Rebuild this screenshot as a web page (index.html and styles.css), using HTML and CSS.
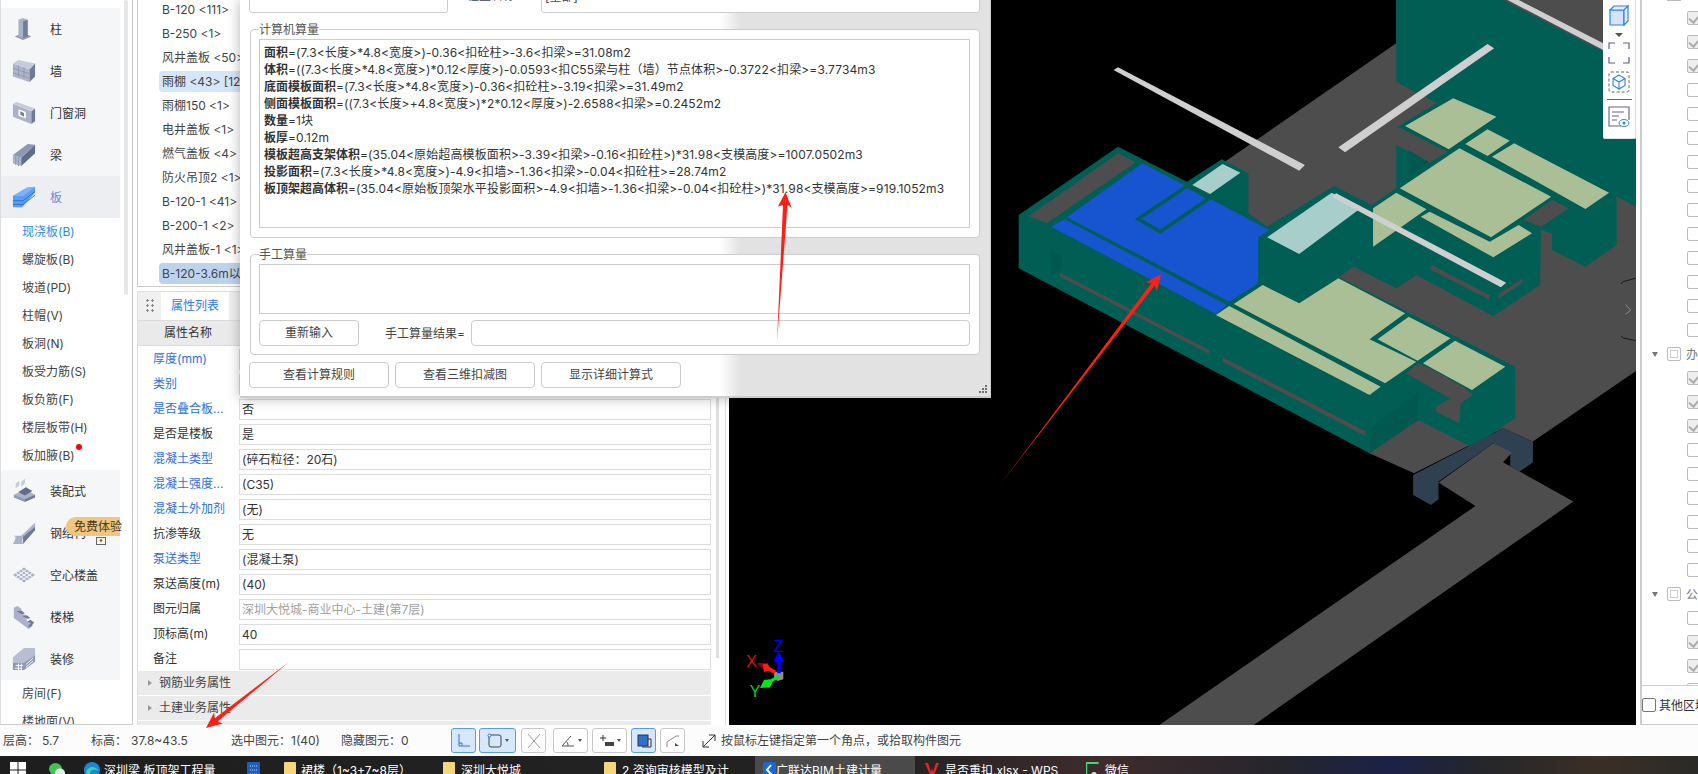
FILE: index.html
```html
<!DOCTYPE html>
<html lang="zh-CN">
<head>
<meta charset="utf-8">
<title>广联达BIM土建计量</title>
<link rel="stylesheet" href="styles.css">
</head>
<body>
<div class="main">
  <aside class="nav">
    <div class="cat"><svg class="ico" viewBox="0 0 26 26"><path d="M3 21l9-4 9 4-9 4z" fill="#8e98b4"/><path d="M7 3l5-2 5 2v18l-5 2-5-2z" fill="#aab2c8"/><path d="M12 5l5-2v18l-5 2z" fill="#727d9c"/></svg><span>柱</span></div>
    <div class="cat"><svg class="ico" viewBox="0 0 26 26"><path d="M1 5l18 6v14L1 19z" fill="#aeb5ca"/><path d="M19 11l6-6v14l-6 6z" fill="#6f7a99"/><path d="M1 5l6-4 18 4-6 6z" fill="#c6cbda"/><path d="M1 10l18 6M1 15l18 6M7 7v5M13 9v6M7 13v6M13 15v6" stroke="#8e98b4" fill="none"/></svg><span>墙</span></div>
    <div class="cat"><svg class="ico" viewBox="0 0 26 26"><path d="M1 3l20 8v14L1 17z" fill="#aab2c8"/><path d="M21 11l4-3v14l-4 3z" fill="#6f7a99"/><path d="M1 3l4-2 20 7-4 3z" fill="#c6cbda"/><path d="M7 9l8 3v7l-8-3z" fill="#fff"/><path d="M9 11l4 2v4l-4-2z" fill="#727d9c"/></svg><span>门窗洞</span></div>
    <div class="cat"><svg class="ico" viewBox="0 0 26 26"><path d="M1 13l9 3v9l-9-3z" fill="#aab2c8"/><path d="M10 16L25 2v9L10 25z" fill="#5f6c8e"/><path d="M1 13L17 1l8 1-15 14z" fill="#8e98b4"/><path d="M4 14v10M7 15v10" stroke="#8e98b4"/></svg><span>梁</span></div>
    <div class="cat cat-on"><svg class="ico" viewBox="0 0 26 26"><path d="M1 12l15-9 9-1v6L11 24H1z" fill="#5b9cf5"/><path d="M1 12h11l13-10-9 1z" fill="#7fb3f8"/><path d="M1 17h11l13-10M1 21h11l13-10" stroke="#2f6fd0" fill="none"/></svg><span>板</span></div>
    <div class="sub sub-on">现浇板(B)</div>
    <div class="sub">螺旋板(B)</div>
    <div class="sub">坡道(PD)</div>
    <div class="sub">柱帽(V)</div>
    <div class="sub">板洞(N)</div>
    <div class="sub">板受力筋(S)</div>
    <div class="sub">板负筋(F)</div>
    <div class="sub">楼层板带(H)</div>
    <div class="sub">板加腋(B)<i class="dot"></i></div>
    <div class="cat"><svg class="ico" viewBox="0 0 26 26"><path d="M2 17l12-6 11 6-11 7z" fill="#aab2c8"/><path d="M2 17v3l12 5v-3z" fill="#8e98b4"/><path d="M14 22l11-5v3l-11 5z" fill="#6f7a99"/><path d="M7 14l8-5 7 4-8 5z" fill="#5f6c8e"/><path d="M4 5l4-3v5l-4 3zM10 3l4-3v5l-4 3z" fill="#c6cbda"/></svg><span>装配式</span></div>
    <div class="cat"><svg class="ico" viewBox="0 0 26 26"><path d="M1 16h9l15-14v4L12 17l-1 5 1 3H1l2-4 1-4z" fill="#aab2c8"/><path d="M12 17L25 6v4L12 25z" fill="#6f7a99"/></svg><span>钢结构</span><b class="trial">免费体验</b><svg class="lock" viewBox="0 0 10 10"><rect x=".5" y="2.5" width="9" height="7" fill="#fff3dc" stroke="#666"/><circle cx="5" cy="5.5" r="1.2" fill="#555"/></svg></div>
    <div class="cat"><svg class="ico" viewBox="0 0 26 26"><path d="M1 13L13 5l12 8-12 8z" fill="#aab2c8"/><path d="M7 9l12 8M10 7l12 8M4 11l12 8M16 7L4 15M19 9L7 17M22 11l-12 8" stroke="#fff"/></svg><span>空心楼盖</span></div>
    <div class="cat"><svg class="ico" viewBox="0 0 26 26"><path d="M2 3l4-2 4 3v5l6 3v5l6 3v3l-4 3L2 14z" fill="#aab2c8"/><path d="M5 7l6 3 3-1-4-3zM11 12l6 3 3-1-4-3zM17 18l5 3 2-2-4-3z" fill="#6f7a99"/><path d="M18 25l4-3v-3l-4 3z" fill="#6f7a99"/></svg><span>楼梯</span></div>
    <div class="cat"><svg class="ico" viewBox="0 0 26 26"><path d="M1 11L13 1h12v14L13 17H1z" fill="#b8bed1"/><path d="M1 17h12L25 9v7L13 25H1z" fill="#8e98b4"/><path d="M4 20h8M3 23h8M7 18v7M10 18v7M15 19l8-7M15 22l8-7" stroke="#fff"/></svg><span>装修</span></div>
    <div class="sub">房间(F)</div>
    <div class="sub">楼地面(V)</div>
    <i class="nav-thumb"></i>
  </aside>

  <section class="center">
    <div class="list">
      <div class="li">B-120 &lt;111&gt;</div>
      <div class="li">B-250 &lt;1&gt;</div>
      <div class="li">风井盖板 &lt;50&gt;</div>
      <div class="li li-a">雨棚 &lt;43&gt; [12</div>
      <div class="li">雨棚150 &lt;1&gt;</div>
      <div class="li">电井盖板 &lt;1&gt;</div>
      <div class="li">燃气盖板 &lt;4&gt;</div>
      <div class="li">防火吊顶2 &lt;1&gt;</div>
      <div class="li">B-120-1 &lt;41&gt;</div>
      <div class="li">B-200-1 &lt;2&gt;</div>
      <div class="li">风井盖板-1 &lt;1&gt;</div>
      <div class="li li-b">B-120-3.6m以</div>
    </div>
    <div class="props">
      <div class="tabs"><i class="grip"></i><span class="tab">属性列表</span></div>
      <div class="thead"><span>属性名称</span></div>
      <div class="pbody">
        <div class="rows">
          <div class="row"><span class="k blue">厚度(mm)</span><span class="v"></span></div>
          <div class="row"><span class="k blue">类别</span><span class="v"></span></div>
          <div class="row"><span class="k blue">是否叠合板...</span><span class="v">否</span></div>
          <div class="row"><span class="k">是否是楼板</span><span class="v">是</span></div>
          <div class="row"><span class="k blue">混凝土类型</span><span class="v">(碎石粒径：20石)</span></div>
          <div class="row"><span class="k blue">混凝土强度...</span><span class="v">(C35)</span></div>
          <div class="row"><span class="k blue">混凝土外加剂</span><span class="v">(无)</span></div>
          <div class="row"><span class="k">抗渗等级</span><span class="v">无</span></div>
          <div class="row"><span class="k blue">泵送类型</span><span class="v">(混凝土泵)</span></div>
          <div class="row"><span class="k">泵送高度(m)</span><span class="v">(40)</span></div>
          <div class="row"><span class="k">图元归属</span><span class="v v-dim">深圳大悦城-商业中心-土建(第7层)</span></div>
          <div class="row"><span class="k">顶标高(m)</span><span class="v">40</span></div>
          <div class="row"><span class="k">备注</span><span class="v"></span></div>
          <div class="grp"><i class="tri"></i>钢筋业务属性</div>
          <div class="grp"><i class="tri"></i>土建业务属性</div>
          <div class="grp"></div>
        </div>
        <i class="pthumb"></i>
      </div>
    </div>
  </section>

  <div class="view">
    <svg class="scene" viewBox="0 0 907 725" width="907" height="725">
      <g transform="translate(271 0) scale(.4452 .3333)">
        <polygon fill="#4d4d4d" points="890,130 500,490 500,700 830,1360 930,1420 1130,1285 1197,1325 1429,1113 1429,0 890,0"/>
        <polygon fill="#015e54" points="890,0 1130,0 1429,205 1429,620 890,245"/>
        <polygon fill="#015e54" points="42,645 265,440 420,545 498,478 558,520 558,640 600,680 750,558 835,615 890,565 890,435 965,488 1005,455 893,380 1018,280 1135,350 1135,395 1385,580 1385,735 1315,800 1240,750 1240,700 1215,690 1213,855 1108,948 935,825 890,865 795,800 760,830 1157,1100 1157,1255 1060,1342 940,1260 830,1360 42,805"/>
        <polygon fill="#01584e" points="830,1285 830,1360 938,1260 938,1180"/>
        <polygon fill="#01584e" points="918,450 965,488 918,525"/>
        <polygon fill="#01584e" points="115,750 140,770 140,810 115,825"/>
        <polygon fill="#4d4d4d" points="65,648 265,460 305,487 105,670"/>
        <polygon fill="#1754cf" points="150,652 320,490 605,690 580,712 580,850 515,905"/>
        <polygon fill="#1754cf" points="115,680 145,658 510,915 485,942"/>
        <polygon fill="none" stroke="#015e54" stroke-width="3.5" vector-effect="non-scaling-stroke" points="310,657 420,558 470,595 360,695"/>
        <polygon fill="#a7cecb" points="432,555 500,492 540,518 472,582"/>
        <polygon fill="#a7cecb" points="600,712 745,578 810,625 672,762"/>
        <g fill="#abbf97">
          <polygon points="910,378 1018,295 1115,350 1008,448"/>
          <polygon points="1045,432 1095,388 1145,422 1095,468"/>
          <polygon points="1105,470 1155,430 1368,578 1315,627"/>
          <polygon points="898,565 1032,445 1238,590 1103,712"/>
          <polygon points="838,625 890,578 958,628 838,740"/>
          <polygon points="945,650 965,635 1100,725 1165,675 1195,700 1108,772"/>
          <polygon points="525,912 590,855 672,910 760,835 910,940 830,1018 935,1085 865,1150"/>
          <polygon points="485,945 515,918 855,1160 830,1185"/>
          <polygon points="848,1018 918,950 1012,1015 938,1082"/>
          <polygon points="950,1090 1022,1022 1135,1100 1060,1170"/>
        </g>
        <g fill="#4d4d4d">
          <polygon points="912,1120 940,1090 975,1110 1040,1160 1062,1185 1035,1210 1032,1270 980,1235 980,1220 1010,1195"/>
          <polygon points="1175,660 1240,600 1278,625 1215,680"/>
          <polygon points="135,818 470,1050 470,1062 135,830"/>
          <polygon points="500,1072 820,1293 820,1308 500,1085"/>
          <polygon points="970,795 1100,885 1100,900 965,808"/>
          <polygon points="1120,882 1175,835 1172,850 1120,897"/>
        </g>
        <polygon fill="#2f4050" points="928,1425 1130,1285 1197,1325 1197,1388 1167,1415 1146,1398 1146,1365 1108,1330 985,1445 985,1498 968,1515 928,1485"/>
        <polygon fill="#4d4d4d" points="985,1448 1108,1330 1150,1358 1130,1387 1288,1505 570,2175 358,2175 1068,1518"/>
        <g fill="#cfcfcf">
          <polygon points="255,210 265,202 685,495 672,512"/>
          <polygon points="760,442 1095,132 1110,145 775,457"/>
          <polygon points="745,590 755,580 1137,848 1125,862"/>
          <polygon points="1140,0 1165,0 1355,130 1355,150"/>
        </g>
        <polyline fill="none" stroke="#8a8a8a" stroke-width="1" vector-effect="non-scaling-stroke" points="1405,915 1417,930 1405,943"/>
        <polyline fill="none" stroke="#1a1a1a" stroke-width="1" vector-effect="non-scaling-stroke" points="1395,852 1400,845 1427,835"/>
        <polyline fill="none" stroke="#1a1a1a" stroke-width="1" vector-effect="non-scaling-stroke" points="1395,1008 1400,1014 1428,1022"/>
      </g>
      <g transform="translate(-9 420) scale(.3333)">
        <polygon fill="#8f8f8f" points="162,755 190,755 190,778 172,783 162,772"/>
        <polygon fill="#8b0000" points="110,730 135,728 132,750"/>
        <polygon fill="#ff1a1a" points="128,733 142,730 148,740 168,752 164,762 145,752 132,757"/>
        <polygon fill="#0000ff" points="176,695 192,722 182,730 182,760 172,760 172,730 161,722"/>
        <polygon fill="#00e81a" points="175,765 180,772 158,785 150,802 120,804 132,780 152,778"/>
        <text class="ax" x="176" y="696" fill="#0000ff">Z</text>
        <text class="ax" x="95" y="740" fill="#e01010">X</text>
        <text class="ax" x="105" y="832" fill="#00d020">Y</text>
      </g>
    </svg>
    <div class="vtools">
      <svg viewBox="0 0 22 22" width="22" height="22"><path d="M2 6h14v15H2z" fill="#d3e4fb" stroke="#2f80ed" stroke-width="1.2"/><path d="M2 6l4-4h14l-4 4zM16 6l4-4v15l-4 4z" fill="#e8f1fd" stroke="#2f80ed" stroke-width="1.2"/></svg>
      <i class="vcaret"></i>
      <svg viewBox="0 0 22 22" width="22" height="22"><path d="M1 7V1h6M15 1h6v6M21 15v6h-6M7 21H1v-6" fill="none" stroke="#5b6478" stroke-width="1.2"/></svg>
      <svg class="vgap" viewBox="0 0 22 22" width="22" height="22"><rect x="1" y="1" width="20" height="20" rx="2" fill="none" stroke="#5b6478" stroke-dasharray="3 2"/><path d="M11 4l6 3.5v7L11 18l-6-3.5v-7zM5 7.5l6 3.500 6-3.500M11 11v7" fill="none" stroke="#2f80ed" stroke-width="1.100"/></svg>
      <i class="vline"></i>
      <svg viewBox="0 0 22 22" width="22" height="22"><path d="M13 20H1V1h20v13" fill="none" stroke="#5b6478" stroke-width="1.100"/><path d="M4 6h12M4 10h7M4 14h5" stroke="#5b6478"/><ellipse cx="16" cy="17" rx="5" ry="3.500" fill="#fff" stroke="#2f80ed"/><circle cx="16" cy="17" r="1.500" fill="#2f80ed"/></svg>
    </div>
  </div>

  <aside class="right">
    <div class="rinner">
      <div class="tree">
        <div class="stub"></div>
        <div class="t"><i class="cb on"></i></div><div class="t"><i class="cb on"></i></div><div class="t"><i class="cb on"></i></div>
        <div class="t"><i class="cb"></i></div><div class="t"><i class="cb"></i></div><div class="t"><i class="cb"></i></div><div class="t"><i class="cb"></i></div><div class="t"><i class="cb"></i></div><div class="t"><i class="cb"></i></div><div class="t"><i class="cb"></i></div><div class="t"><i class="cb"></i></div><div class="t"><i class="cb"></i></div><div class="t"><i class="cb"></i></div><div class="t"><i class="cb"></i></div>
        <div class="tg"><i class="tdown"></i><i class="cb cb-g"></i><span>办</span></div>
        <div class="t"><i class="cb on"></i></div><div class="t"><i class="cb on"></i></div><div class="t"><i class="cb on"></i></div>
        <div class="t"><i class="cb"></i></div><div class="t"><i class="cb"></i></div><div class="t"><i class="cb"></i></div><div class="t"><i class="cb"></i></div><div class="t"><i class="cb"></i></div><div class="t"><i class="cb"></i></div>
        <div class="tg"><i class="tdown"></i><i class="cb cb-g"></i><span>公</span></div>
        <div class="t"><i class="cb"></i></div><div class="t"><i class="cb on"></i></div><div class="t"><i class="cb on"></i></div><div class="t"><i class="cb"></i></div>
      </div>
      <div class="other"><i class="cb cb-o"></i><span>其他区域</span></div>
    </div>
  </aside>
</div>

<footer class="status">
  <span class="st w39">层高：</span><span class="st w49">5.7</span>
  <span class="st w40">标高：</span><span class="st w100">37.8~43.5</span>
  <span class="st w60">选中图元：</span><span class="st w50">1(40)</span>
  <span class="st w60">隐藏图元：</span><span class="st w50">0</span>
  <span class="sb sb-on w25"><svg viewBox="0 0 16 16" width="16" height="16"><path d="M3 1v12h11" fill="none" stroke="#2f6fd0"/><path d="M3 10h3v3" fill="none" stroke="#2f6fd0"/></svg></span>
  <span class="sb sb-on w37 mg3"><svg viewBox="0 0 16 16" width="16" height="16"><rect x="2" y="2" width="12" height="12" rx="2" fill="none" stroke="#444"/><circle cx="2.500" cy="2.500" r="1.500" fill="#fff" stroke="#2f6fd0"/></svg><i class="caret"></i></span>
  <span class="sb w25 mg5"><svg viewBox="0 0 16 16" width="16" height="16"><path d="M2 1l12 14M14 1L2 15" stroke="#999" fill="none"/></svg></span>
  <span class="sb w35 mg7"><svg viewBox="0 0 16 16" width="16" height="16"><path d="M2 13L11 3M2 13h12" stroke="#555" fill="none"/><path d="M8 13a6 6 0 0 0-1-4" stroke="#555" fill="none"/></svg><i class="caret"></i></span>
  <span class="sb w35 mg4"><svg viewBox="0 0 16 16" width="16" height="16"><path d="M1 5h6M4 2v6" stroke="#333" fill="none"/><rect x="6" y="9" width="9" height="4" fill="#444"/></svg><i class="caret"></i></span>
  <span class="sb sb-on w25 mg4"><svg viewBox="0 0 16 16" width="16" height="16"><rect x="2" y="2" width="10" height="11" fill="#2f6fd0" stroke="#333"/><path d="M12 6h3v8H6" fill="none" stroke="#333"/></svg></span>
  <span class="sb w25 mg4"><svg viewBox="0 0 16 16" width="16" height="16"><path d="M2 14V9l9-6h3" fill="none" stroke="#888"/><path d="M10 10l4 3h-4z" fill="#444"/></svg></span>
  <svg class="expand" viewBox="0 0 16 16" width="16" height="16"><path d="M2 14L14 2M8 2h6v6M2 8v6h6" fill="none" stroke="#333"/></svg>
  <span class="st">按鼠标左键指定第一个角点，或拾取构件图元</span>
</footer>

<footer class="taskbar">
  <span class="tb tb1"><svg viewBox="0 0 16 16" width="16" height="16"><path d="M0 0h7.500v7.500H0zM8.500 0H16v7.500H8.500zM0 8.500h7.500V16H0zM8.500 8.500H16V16H8.500z" fill="#fff"/></svg></span>
  <span class="tb tb2"><svg viewBox="0 0 16 16" width="16" height="16"><ellipse cx="6.500" cy="7" rx="6.500" ry="6" fill="#3fc24f"/><ellipse cx="11" cy="11" rx="5" ry="4.500" fill="#e8f5e9"/></svg></span>
  <span class="tb tb3"><svg viewBox="0 0 16 16" width="16" height="16"><circle cx="8" cy="8" r="8" fill="#1b86d8"/><path d="M2 10c2-6 10-7 12-1-3-2-8-2-8 3 0 2 2 3 4 4-4 1-7-2-8-6z" fill="#3fd0a0"/></svg><em>深圳梁 板顶架工程量</em></span>
  <span class="tb tb4"><svg viewBox="0 0 13 16" width="13" height="16"><rect width="13" height="16" rx="1" fill="#1d5fb8"/><path d="M3 4h7M3 8h7M3 12h7" stroke="#bcd6f5" stroke-dasharray="1 1"/></svg></span>
  <span class="tb tb5"><i class="folder"></i><em>裙楼（1~3+7~8层）</em></span>
  <span class="tb tb6"><i class="folder"></i><em>深圳大悦城</em></span>
  <span class="tb tb7"><i class="folder"></i><em>2 咨询审核模型及计</em></span>
  <span class="tb tb8"><svg viewBox="0 0 13 16" width="13" height="16"><rect width="13" height="16" rx="2" fill="#1668dc"/><path d="M8 3L4 8l5 5" fill="none" stroke="#fff" stroke-width="2"/></svg><em>广联达BIM土建计量</em></span>
  <span class="tb tb9"><svg viewBox="0 0 16 14" width="16" height="14"><path d="M1 1h3l3 9 1-4 1 4 3-9h3l-5 12H6z" fill="#e8262a"/></svg><em>是否重扣.xlsx - WPS</em></span>
  <span class="tb tb10"><svg viewBox="0 0 13 16" width="13" height="16"><path d="M.5 16V1h12" fill="none" stroke="#3fd67a" stroke-width="1.500"/><path d="M.5 1h12" stroke="#3fd67a" stroke-width="2"/><circle cx="8" cy="13" r="3" fill="#ddd"/></svg><em>微信</em></span>
</footer>

<div class="dialog">
  <div class="dtop">
    <span class="dinput"></span>
    <span class="dlabel">工程量名称：</span>
    <span class="dselect">[全部]</span>
  </div>
  <div class="fs fs1">
    <span class="legend">计算机算量</span>
    <div class="calc">
      <p><b>面积</b>=(7.3&lt;长度&gt;*4.8&lt;宽度&gt;)-0.36&lt;扣砼柱&gt;-3.6&lt;扣梁&gt;=31.08m2</p>
      <p><b>体积</b>=((7.3&lt;长度&gt;*4.8&lt;宽度&gt;)*0.12&lt;厚度&gt;)-0.0593&lt;扣C55梁与柱（墙）节点体积&gt;-0.3722&lt;扣梁&gt;=3.7734m3</p>
      <p><b>底面模板面积</b>=(7.3&lt;长度&gt;*4.8&lt;宽度&gt;)-0.36&lt;扣砼柱&gt;-3.19&lt;扣梁&gt;=31.49m2</p>
      <p><b>侧面模板面积</b>=((7.3&lt;长度&gt;+4.8&lt;宽度&gt;)*2*0.12&lt;厚度&gt;)-2.6588&lt;扣梁&gt;=0.2452m2</p>
      <p><b>数量</b>=1块</p>
      <p><b>板厚</b>=0.12m</p>
      <p><b>模板超高支架体积</b>=(35.04&lt;原始超高模板面积&gt;-3.39&lt;扣梁&gt;-0.16&lt;扣砼柱&gt;)*31.98&lt;支模高度&gt;=1007.0502m3</p>
      <p><b>投影面积</b>=(7.3&lt;长度&gt;*4.8&lt;宽度&gt;)-4.9&lt;扣墙&gt;-1.36&lt;扣梁&gt;-0.04&lt;扣砼柱&gt;=28.74m2</p>
      <p><b>板顶架超高体积</b>=(35.04&lt;原始板顶架水平投影面积&gt;-4.9&lt;扣墙&gt;-1.36&lt;扣梁&gt;-0.04&lt;扣砼柱&gt;)*31.98&lt;支模高度&gt;=919.1052m3</p>
    </div>
  </div>
  <div class="fs fs2">
    <span class="legend">手工算量</span>
    <div class="manual"></div>
    <div class="mrow">
      <span class="btn b100">重新输入</span>
      <span class="mlabel">手工算量结果=</span>
      <span class="minput"></span>
    </div>
  </div>
  <div class="dbtns">
    <span class="btn b140">查看计算规则</span>
    <span class="btn b140">查看三维扣减图</span>
    <span class="btn b140">显示详细计算式</span>
  </div>
  <svg class="resize" viewBox="0 0 8 8" width="8" height="8"><path d="M6 0h2v2H6zM3 3h2v2H3zM6 3h2v2H6zM0 6h2v2H0zM3 6h2v2H3zM6 6h2v2H6z" fill="#6f6f6f"/></svg>
</div>

<svg class="annot" viewBox="0 0 1698 774" width="1698" height="774">
  <polygon fill="#ff2015" points="1000,485 1154.700,285.500 1156.900,290.900 1161,274 1145.700,282.500 1151.500,283.100"/>
  <polygon fill="#ff2015" points="777,342 787.500,205 791.500,207.400 785.500,192 778,206.600 783,205"/>
  <polygon fill="#ff2015" points="289,662 217.600,721.600 222.900,723.500 206,728 214.100,712.500 214.800,718.200"/>
</svg>
</body>
</html>
```
FILE: styles.css
```css
* { box-sizing: border-box; }
html, body { margin: 0; padding: 0; }
body {
  width: 1698px; height: 774px; overflow: hidden; position: relative; background: #fff;
  font: 12px/17px Inter, "Noto Sans CJK SC", sans-serif; color: #333;
}
i, em { font-style: normal; display: block; }
.main { display: flex; height: 725px; }

/* left nav */
.nav { position: relative; width: 133px; height: 725px; overflow: hidden; padding-top: 8px; border-left: 1px solid #ddd; border-right: 1px solid #ccc; border-bottom: 1px solid #ccc; flex: none; }
.cat { position: relative; width: 119px; height: 42px; display: flex; align-items: center; gap: 14px; padding-left: 11px; background: #f5f6f8; }
.cat-on { background: #edeef2; color: #7389d8; }
.ico { width: 24px; height: 24px; flex: none; }
.sub { position: relative; height: 28px; line-height: 28px; padding-left: 21px; color: #444; white-space: nowrap; }
.sub-on { color: #2a8cf0; }
.dot { position: absolute; left: 75px; top: 2px; width: 6px; height: 6px; border-radius: 50%; background: #f00; }
.trial { position: absolute; left: 65px; top: 5px; width: 54px; height: 19px; line-height: 19px; padding-left: 8px; font-weight: 400; background: #f0c67f; border-radius: 10px 0 0 10px; color: #4a3a20; white-space: nowrap; }
.lock { position: absolute; left: 95px; top: 23px; width: 10px; height: 10px; }
.nav-thumb { position: absolute; left: 123px; top: 0; width: 4px; height: 295px; background: #e6e6e6; border-radius: 2px; }

/* center column */
.center { width: 589px; margin-left: 4px; flex: none; display: flex; flex-direction: column; gap: 4px; }
.list { height: 287px; border: 1px solid #ccc; border-top: 0; display: flex; flex-direction: column; justify-content: flex-end; overflow: hidden; flex: none; }
.li { height: 24px; flex: none; padding: 0 0 0 24px; line-height: 24px; color: #444; white-space: pre; }
.li-a, .li-b { position: relative; z-index: 0; }
.li-a::before, .li-b::before { content: ""; position: absolute; z-index: -1; left: 21px; right: 0; top: 1px; height: 21px; border-radius: 4px 0 0 4px; background: #d6e6f9; }
.li-b::before { background: #bdd3ec; }
.props { flex: 1; border: 1px solid #ddd; border-bottom: 0; overflow: hidden; display: flex; flex-direction: column; min-height: 0; }
.tabs { height: 29px; background: #f0f0f0; display: flex; align-items: stretch; flex: none; border-bottom: 1px solid #ddd; }
.grip { width: 8px; height: 15px; margin: 7px 0 0 8px; background: radial-gradient(circle at 1.500px 1.500px, #888 1.300px, transparent 1.400px) 0 0 / 5px 5px; }
.tab { width: 68px; margin-left: 7px; background: #fff; text-align: center; line-height: 28px; color: #2a7be8; }
.thead { height: 25px; background: #eaeaea; border-bottom: 1px solid #ddd; line-height: 24px; padding-left: 26px; flex: none; }
.pbody { display: flex; flex: 1; min-height: 0; }
.rows { width: 573px; flex: none; }
.row { height: 25px; display: flex; align-items: flex-start; }
.k { width: 101px; padding-left: 15px; line-height: 25px; white-space: nowrap; flex: none; }
.blue { color: #2a6fe8; }
.v { flex: 1; height: 21px; margin-top: 3px; border: 1px solid #ddd; padding-left: 2px; line-height: 19px; }
.v-dim { color: #a0a0a0; }
.grp { height: 24px; margin-bottom: 1px; background: #ebebeb; line-height: 24px; display: flex; align-items: center; color: #444; }
.tri { width: 0; height: 0; margin: 0 7px 0 10px; border-left: 4px solid #999; border-top: 3px solid transparent; border-bottom: 3px solid transparent; }
.pthumb { width: 3px; height: 312px; margin-left: 5px; background: #ddd; }

/* 3D view */
.view { position: relative; width: 907px; height: 725px; margin-left: 3px; background: #000; flex: none; overflow: hidden; }
.scene { display: block; }
.ax { font: 48px "Liberation Sans", sans-serif; text-anchor: middle; }
.vtools { position: absolute; right: 0; top: 0; width: 33px; height: 139px; background: #fff; border-radius: 0 0 2px 2px; border-right: 1px solid #ddd; border-bottom: 1px solid #ddd; display: flex; flex-direction: column; align-items: center; padding-top: 4px; }
.vcaret { width: 0; height: 0; margin: 7px 0 5px; border-top: 4px solid #555; border-left: 4px solid transparent; border-right: 4px solid transparent; }
.vgap { margin-top: 7px; }
.vline { width: 25px; height: 1px; background: #666; margin: 6px 0; }

/* right tree */
.right { width: 62px; padding-left: 4px; flex: none; overflow: hidden; }
.rinner { height: 725px; border-left: 2px solid #ccc; border-bottom: 1px solid #ccc; width: 100px; display: flex; flex-direction: column; }
.tree { height: 685px; overflow: hidden; flex: none; }
.stub { height: 6px; }
.stub::before { content: ""; display: block; width: 14px; height: 1px; margin-left: 25px; background: #bbb; }
.t, .tg { height: 24px; display: flex; align-items: center; color: #777; }
.t { padding-left: 45px; }
.tg { position: relative; padding-left: 25px; }
.tg span { margin-left: 5px; }
.tdown { position: absolute; left: 10px; top: 10px; border-top: 5px solid #777; border-left: 3.500px solid transparent; border-right: 3.500px solid transparent; }
.cb { position: relative; display: block; width: 14px; height: 14px; flex: none; border: 1px solid #bbb; border-radius: 2px; background: #fff; }
.cb.on { background: #eee; }
.cb.on::after { content: ""; position: absolute; left: 3px; top: 0; width: 5px; height: 9px; border-right: 2px solid #aaa; border-bottom: 2px solid #aaa; transform: rotate(40deg); }
.cb-g::after { content: ""; position: absolute; left: 2px; top: 2px; right: 2px; bottom: 2px; border: 1px solid #ccc; }
.other { flex: 1; border-top: 1px solid #ccc; display: flex; align-items: center; white-space: nowrap; color: #333; }
.cb-o { border-color: #777; margin-right: 3px; }

/* status */
.status { height: 31px; background: #fcfcfc; display: flex; align-items: center; padding-left: 3px; color: #444; white-space: nowrap; }
.st { display: block; flex: none; }
.w39 { width: 39px; } .w49 { width: 49px; } .w40 { width: 40px; } .w100 { width: 100px; } .w60 { width: 60px; } .w50 { width: 50px; }
.sb { height: 25px; border: 1px solid #c8c8c8; border-radius: 3px; background: #fff; display: flex; align-items: center; justify-content: center; gap: 2px; flex: none; }
.sb-on { background: #d8e8fc; border-color: #5a9be8; }
.w25 { width: 25px; } .w35 { width: 35px; } .w37 { width: 37px; }
.mg3 { margin-left: 3px; } .mg4 { margin-left: 4px; } .mg5 { margin-left: 5px; } .mg7 { margin-left: 7px; }
.caret { width: 0; height: 0; border-top: 3px solid #555; border-left: 2.500px solid transparent; border-right: 2.500px solid transparent; }
.expand { margin: 0 4px 0 16px; flex: none; }

/* taskbar */
.taskbar { height: 18px; overflow: hidden; display: flex; color: #fff; background: linear-gradient(90deg, #1e1e1e 0, #232323 900px, #3f2b2d 1100px, #25252c 1280px, #1c2248 1390px, #24262a 1480px, #3a2f25 1600px, #2a2a28 1698px); }
.tb { display: flex; align-items: flex-start; padding-top: 7px; height: 18px; white-space: nowrap; flex: none; gap: 3px; }
.tb svg, .tb .folder { flex: none; margin-top: -1px; }
.tb em { line-height: 16px; }
.tb1 { width: 49px; padding-left: 10px; }
.tb2 { width: 35px; }
.tb3 { width: 163px; gap: 4px; }
.tb4 { width: 37px; }
.tb5 { width: 159px; gap: 5px; } .tb6 { width: 161px; gap: 6px; } .tb7 { width: 151px; gap: 6px; }
.tb8 { width: 160px; padding-left: 8px; background: #4a4a4a; gap: 0; }
.tb9 { width: 171px; padding-left: 9px; gap: 5px; }
.tb10 { gap: 6px; }
.folder { width: 12px; height: 16px; background: #f5d67a; border-radius: 1px; }

/* dialog */
.dialog { position: absolute; left: 240px; top: 0; width: 751px; height: 398px; background: linear-gradient(90deg, #fff 0, #fff 480px, #e2e2e2 500px); border-right: 1px solid #ccc; border-bottom: 2px solid #ccc; box-shadow: 0 0 12px rgba(0,0,0,.3); padding-left: 10px; display: flex; flex-direction: column; align-items: flex-start; color: #333; }
.dtop { display: flex; height: 13px; overflow: hidden; align-items: flex-end; margin-left: -1px; flex: none; }
.dinput { width: 199px; height: 20px; background: #fff; border: 1px solid #ccc; border-radius: 3px; }
.dlabel { width: 86px; margin-left: 7px; height: 20px; line-height: 6px; color: #444; }
.dselect { width: 439px; height: 20px; background: #fff; border: 1px solid #ccc; border-radius: 3px; padding-left: 3px; line-height: 6px; color: #444; }
.fs { position: relative; width: 730px; margin-top: 16px; padding: 9px 9px 9px 8px; background: #fff; border: 1px solid #ccc; border-radius: 4px; flex: none; }
.fs1 { height: 209px; }
.fs2 { height: 101px; }
.legend { position: absolute; left: 8px; top: -9px; background: #fff; line-height: 17px; color: #555; }
.calc { height: 189px; width: 711px; border: 1px solid #ccc; padding: 4px 4px; background: #fff; letter-spacing: .12px; }
.calc p { margin: 0; height: 17px; line-height: 17px; white-space: nowrap; color: #333; }
.calc b { font-weight: 700; letter-spacing: 0; }
.manual { height: 50px; width: 711px; border: 1px solid #ccc; background: #fff; }
.mrow { display: flex; align-items: center; margin-top: 6px; }
.btn { display: block; height: 26px; line-height: 24px; text-align: center; border: 1px solid #ccc; border-radius: 4px; background: #fff; flex: none; color: #444; }
.b100 { width: 100px; }
.b140 { width: 140px; }
.mlabel { width: 90px; margin-left: 26px; white-space: nowrap; color: #444; }
.minput { width: 499px; height: 26px; margin-left: -4px; background: #fff; border: 1px solid #ccc; border-radius: 4px; }
.dbtns { display: flex; gap: 6px; margin: 7px 0 0 -1px; flex: none; }
.resize { position: absolute; right: 3px; bottom: 3px; }

.annot { position: absolute; left: 0; top: 0; pointer-events: none; }
```
